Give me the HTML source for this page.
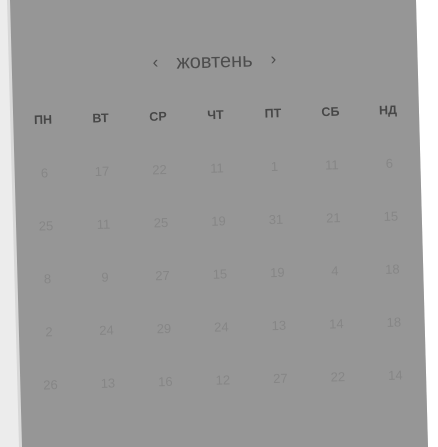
<!DOCTYPE html>
<html><head><meta charset="utf-8"><style>
html,body{margin:0;padding:0;width:438px;height:447px;overflow:hidden}
body{font-family:"Liberation Sans","DejaVu Sans",sans-serif;position:relative;background:linear-gradient(90deg,#ececec 0,#ececec 50%,#fff 50%)}
.sh{position:absolute;left:0;top:0;width:438px;height:447px;background:#d8d8d8;clip-path:polygon(7px 0,416px 0,428px 447px,19px 447px)}
.bg{position:absolute;left:0;top:0;width:438px;height:447px;background:#969696;clip-path:polygon(10px 0,416px 0,428px 447px,22px 447px)}
.card{position:absolute;left:16px;top:13px;width:406px;height:420px;transform-origin:203px 210px;transform:rotate(-1.6deg)}
.t{position:absolute;transform:translate(-50%,-50%);white-space:nowrap}
.h{font-size:20px;color:#4d4d4d}
.ar{font-size:17px;color:#4d4d4d}
.w{font-size:12.5px;font-weight:bold;color:#474747}
.n{font-size:13px;color:#868686}
</style></head><body>
<div class="sh"></div>
<div class="bg"></div>
<div class="card">
<div class="t ar" style="left:144px;top:48px">‹</div>
<div class="t h" style="left:203px;top:49px">жовтень</div>
<div class="t ar" style="left:262px;top:48px">›</div>
<div class="t w" style="left:30px;top:102px">ПН</div>
<div class="t w" style="left:87.5px;top:102px">ВТ</div>
<div class="t w" style="left:145px;top:102px">СР</div>
<div class="t w" style="left:202.5px;top:102px">ЧТ</div>
<div class="t w" style="left:260px;top:102px">ПТ</div>
<div class="t w" style="left:317.5px;top:102px">СБ</div>
<div class="t w" style="left:375px;top:102px">НД</div>
</div>
<script>
var d=[[6,17,22,11,1,11,6],[25,11,25,19,31,21,15],[8,9,27,15,19,4,18],[2,24,29,24,13,14,18],[26,13,16,12,27,22,14]];
var g=document.querySelector('.card'),h='';
d.forEach(function(r,i){r.forEach(function(v,j){h+='<div class="t n" style="left:'+(30+57.5*j)+'px;top:'+(155+53*i)+'px">'+v+'</div>';});});
g.insertAdjacentHTML('beforeend',h);
</script>
</body></html>
